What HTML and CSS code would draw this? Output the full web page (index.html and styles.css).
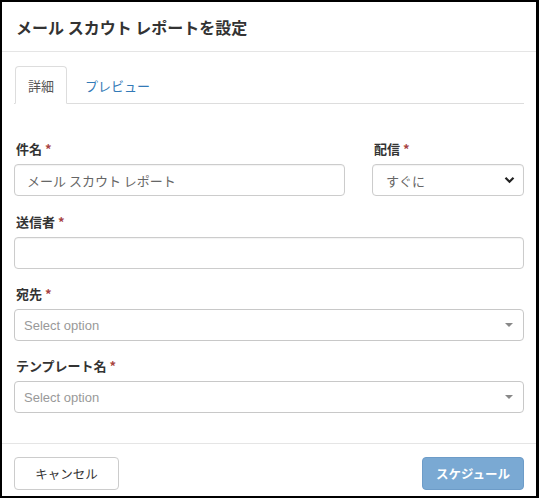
FILE: index.html
```html
<!DOCTYPE html>
<html lang="ja">
<head>
<meta charset="utf-8">
<link rel="stylesheet" href="styles.css">
</head>
<body>
<div class="modal">
  <div class="modal-header">
    <h4 class="modal-title">メール スカウト レポートを設定</h4>
  </div>
  <div class="modal-body">
    <ul class="tabs">
      <li class="tab active">詳細</li>
      <li class="tab">プレビュー</li>
    </ul>
    <div class="tab-content">
      <div class="row">
        <div class="group grow">
          <label class="label">件名 <span class="req">*</span></label>
          <div class="control"><span class="value">メール スカウト レポート</span></div>
        </div>
        <div class="group side">
          <label class="label">配信 <span class="req">*</span></label>
          <div class="control select">
            <span class="value">すぐに</span>
            <svg class="chev" width="11" height="8" viewBox="0 0 11 8"><path d="M1.5 1.8 L5.5 5.8 L9.5 1.8" fill="none" stroke="#222" stroke-width="2.2"/></svg>
          </div>
        </div>
      </div>
      <div class="group">
        <label class="label">送信者 <span class="req">*</span></label>
        <div class="control"></div>
      </div>
      <div class="group">
        <label class="label">宛先 <span class="req">*</span></label>
        <div class="control select2">
          <span class="placeholder">Select option</span>
          <svg width="8" height="4" viewBox="0 0 8 4"><path d="M0 0 H8 L4 4 Z" fill="#888"/></svg>
        </div>
      </div>
      <div class="group">
        <label class="label">テンプレート名 <span class="req">*</span></label>
        <div class="control select2">
          <span class="placeholder">Select option</span>
          <svg width="8" height="4" viewBox="0 0 8 4"><path d="M0 0 H8 L4 4 Z" fill="#888"/></svg>
        </div>
      </div>
    </div>
  </div>
  <div class="modal-footer">
    <button class="btn btn-default">キャンセル</button>
    <button class="btn btn-primary">スケジュール</button>
  </div>
</div>
</body>
</html>
```
FILE: styles.css
```css
* { box-sizing: border-box; }
html, body { margin: 0; padding: 0; background: #fff; }
body {
  font-family: "Noto Sans CJK JP", "Noto Sans", sans-serif;
  color: #333;
  font-size: 13px;
}
.modal {
  width: 539px;
  height: 498px;
  border: 2px solid #000;
  border-right-width: 3px;
  display: flex;
  flex-direction: column;
  background: #fff;
}
.modal-header {
  height: 50px;
  border-bottom: 1px solid #e5e5e5;
  padding: 0 14px;
  display: flex;
  align-items: center;
}
.modal-title {
  margin: 0;
  font-size: 16px;
  font-weight: bold;
  color: #333;
}
.modal-body {
  flex: 1;
  padding: 14px 12px 0 12px;
}
.tabs {
  list-style: none;
  margin: 0;
  padding: 0;
  display: flex;
  border-bottom: 1px solid #ddd;
  height: 38px;
}
.tab {
  height: 38px;
  padding: 0 15px;
  display: flex;
  align-items: center;
  color: #337ab7;
  font-size: 13px;
  margin-right: 2px;
  border: 1px solid transparent;
  border-radius: 4px 4px 0 0;
}
.tab.active {
  color: #555;
  background: #fff;
  border-color: #ddd #ddd #fff #ddd;
  padding: 0 12px;
  margin-left: 1px;
}
.tab-content {
  padding: 36px 0 0 0;
}
.row {
  display: flex;
  gap: 27px;
}
.grow { flex: 1; }
.side { width: 152px; }
.group {
  margin-bottom: 16px;
}
.row .group { margin-bottom: 17px; }
.label {
  display: block;
  font-weight: bold;
  font-size: 13px;
  line-height: 18px;
  margin-bottom: 6px;
  padding-left: 2px;
}
.req { color: #a94442; font-weight: bold; }
.control {
  height: 32px;
  border: 1px solid #ccc;
  border-radius: 4px;
  display: flex;
  align-items: center;
  justify-content: space-between;
  padding: 0 12px;
  font-size: 13px;
  color: #555;
  box-shadow: inset 0 1px 1px rgba(0,0,0,0.05);
}
.select { padding: 0 8px 0 13px; }
.select2 {
  border-color: #c8c8c8;
  padding: 0 10px 0 9px;
  box-shadow: none;
}
.placeholder {
  font-family: "Liberation Sans", Arial, sans-serif;
  color: #999;
  font-size: 13px;
}
.value { color: #666; }
.modal-footer {
  border-top: 1px solid #e5e5e5;
  padding: 13px 12px 0 12px;
  height: 53px;
  display: flex;
  justify-content: space-between;
  align-items: flex-start;
}
.btn {
  height: 33px;
  border-radius: 4px;
  font-family: "Noto Sans CJK JP", sans-serif;
  font-size: 12.5px;
  padding: 0 12px;
  border: 1px solid #ccc;
}
.btn-default {
  width: 105px;
  background: #fff;
  color: #333;
}
.btn-primary {
  width: 102px;
  background: #7aa9d3;
  border-color: #6d9cc8;
  color: #fff;
  font-weight: bold;
}
```
